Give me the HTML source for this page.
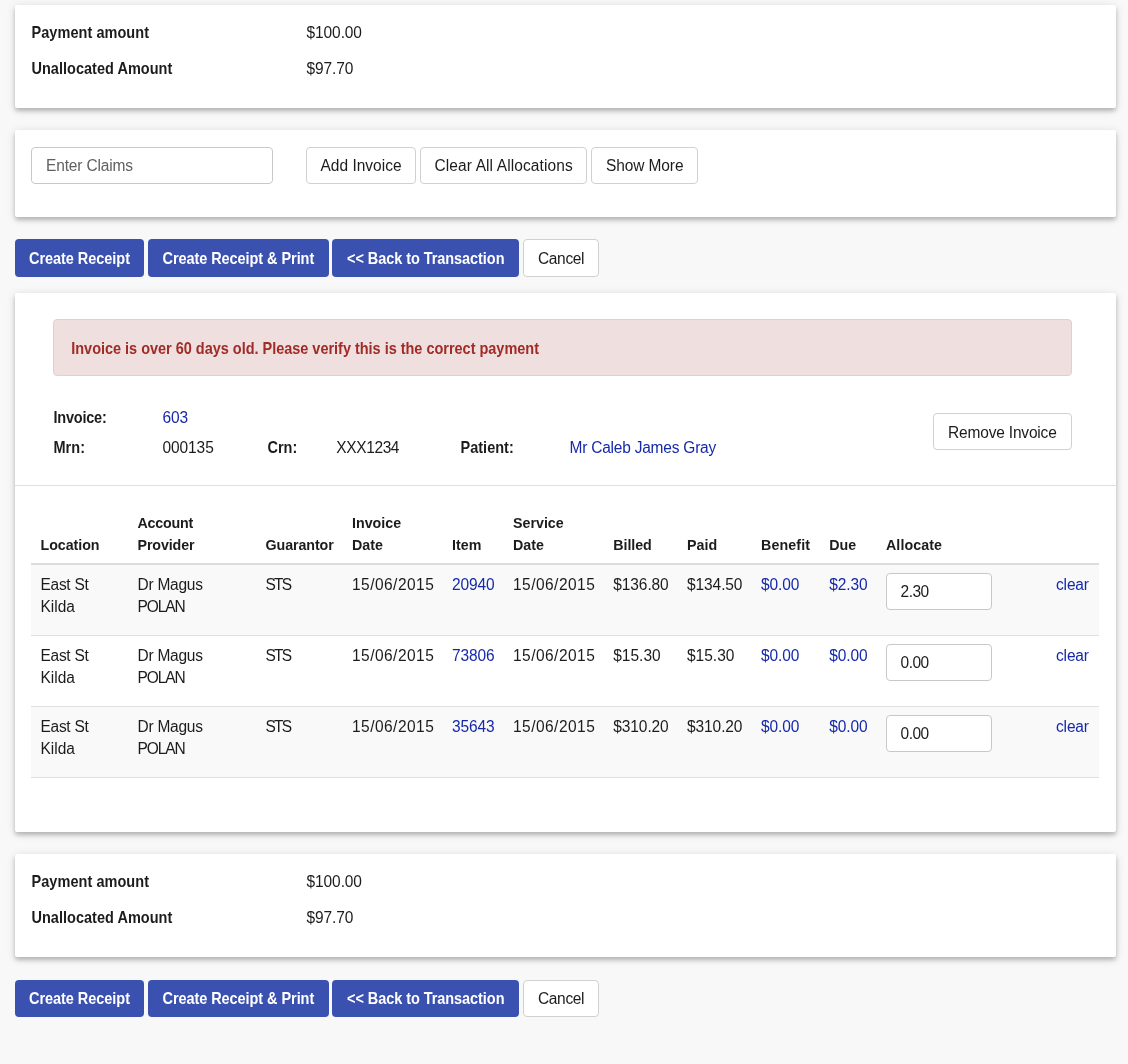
<!DOCTYPE html>
<html><head><meta charset="utf-8"><title>Receipt</title>
<style>
html,body{margin:0;padding:0;}
body{width:1128px;height:1064px;overflow:hidden;background:#f8f8f8;position:relative;font-family:"Liberation Sans",sans-serif;color:#1c1c1c;}
.r,.b{position:absolute;white-space:nowrap;line-height:1;font-size:15.5px;}
.r{transform:scaleY(1.03);transform-origin:0 13px;}
.b{font-weight:700;font-size:14.5px;transform:scaleY(1.08);transform-origin:0 12px;}
.card{position:absolute;background:#fff;border-radius:2px;box-shadow:0 2px 10px rgba(0,0,0,.14),0 3px 4px rgba(0,0,0,.2);}
.inp{position:absolute;box-sizing:border-box;background:#fff;border:1px solid #c8c8c8;border-radius:4px;}
.bd,.bp{position:absolute;box-sizing:border-box;border-radius:4px;}
.bd{background:#fff;border:1px solid #d0d0d0;}
.bp{background:#3b51b0;}
.alert{position:absolute;box-sizing:border-box;background:#efdfdf;border:1px solid #e6cdd0;border-radius:4px;}
.sep{position:absolute;background:#e0e0e0;}
.stripe{position:absolute;background:#f9f9f9;}
</style></head><body>
<div id="w" style="position:absolute;left:0;top:0;width:1128px;height:1064px;will-change:transform">
<div class="card" style="left:15px;top:5px;width:1101px;height:103px;"></div>
<span class="b" style="left:31.5px;top:26px;letter-spacing:0.052px;">Payment amount</span>
<span class="r" style="left:306.5px;top:25px;letter-spacing:-0.089px;">$100.00</span>
<span class="b" style="left:31.5px;top:62px;letter-spacing:0.018px;">Unallocated Amount</span>
<span class="r" style="left:306.5px;top:61px;letter-spacing:-0.083px;">$97.70</span>
<div class="card" style="left:15px;top:130px;width:1101px;height:87px;"></div>
<div class="inp" style="left:31px;top:147px;width:242px;height:37px;"></div>
<span class="r" style="left:46px;top:158px;color:#616161;letter-spacing:-0.157px;">Enter Claims</span>
<div class="bd" style="left:306px;top:147px;width:110px;height:37px"></div>
<span class="r" style="left:320.5px;top:158px;letter-spacing:-0.000px;">Add Invoice</span>
<div class="bd" style="left:420px;top:147px;width:167px;height:37px"></div>
<span class="r" style="left:434.5px;top:158px;letter-spacing:0.106px;">Clear All Allocations</span>
<div class="bd" style="left:591px;top:147px;width:107px;height:37px"></div>
<span class="r" style="left:606.0px;top:158px;letter-spacing:-0.112px;">Show More</span>
<div class="bp" style="left:15px;top:239px;width:129px;height:38px"></div>
<span class="b" style="left:29.0px;top:252px;color:#fff;letter-spacing:-0.042px;">Create Receipt</span>
<div class="bp" style="left:148px;top:239px;width:181px;height:38px"></div>
<span class="b" style="left:162.5px;top:252px;color:#fff;letter-spacing:-0.065px;">Create Receipt &amp; Print</span>
<div class="bp" style="left:332px;top:239px;width:187px;height:38px"></div>
<span class="b" style="left:347.0px;top:252px;color:#fff;letter-spacing:-0.060px;">&lt;&lt; Back to Transaction</span>
<div class="bd" style="left:523px;top:239px;width:76px;height:38px"></div>
<span class="r" style="left:538.0px;top:251px;letter-spacing:-0.350px;">Cancel</span>
<div class="card" style="left:15px;top:293px;width:1101px;height:539px;"></div>
<div class="alert" style="left:53px;top:319px;width:1019px;height:57px;"></div>
<span class="b" style="left:71.25px;top:342px;color:#a12b27;letter-spacing:-0.019px;">Invoice is over 60 days old. Please verify this is the correct payment</span>
<span class="b" style="left:53.5px;top:411px;letter-spacing:-0.221px;">Invoice:</span>
<span class="r" style="left:162.5px;top:410px;color:#1529aa;letter-spacing:-0.177px;">603</span>
<span class="b" style="left:53.5px;top:441px;letter-spacing:0.031px;">Mrn:</span>
<span class="r" style="left:162.5px;top:440px;letter-spacing:-0.095px;">000135</span>
<span class="b" style="left:267.5px;top:441px;">Crn:</span>
<span class="r" style="left:336.25px;top:440px;letter-spacing:-0.376px;">XXX1234</span>
<span class="b" style="left:460.5px;top:441px;letter-spacing:0.011px;">Patient:</span>
<span class="r" style="left:569.5px;top:440px;color:#1529aa;letter-spacing:-0.222px;">Mr Caleb James Gray</span>
<div class="bd" style="left:933px;top:413px;width:139px;height:37px"></div>
<span class="r" style="left:948.0px;top:425px;letter-spacing:-0.180px;">Remove Invoice</span>
<div class="sep" style="left:15px;top:485px;width:1101px;height:1px;"></div>
<span class="b" style="left:40.5px;top:538px;font-size:14.25px;letter-spacing:-0.054px;">Location</span>
<span class="b" style="left:137.5px;top:516px;font-size:14.25px;letter-spacing:-0.208px;">Account</span>
<span class="b" style="left:137.5px;top:538px;font-size:14.25px;letter-spacing:-0.116px;">Provider</span>
<span class="b" style="left:265.5px;top:538px;font-size:14.25px;letter-spacing:-0.079px;">Guarantor</span>
<span class="b" style="left:352px;top:516px;font-size:14.25px;">Invoice</span>
<span class="b" style="left:352px;top:538px;font-size:14.25px;">Date</span>
<span class="b" style="left:452px;top:538px;font-size:14.25px;">Item</span>
<span class="b" style="left:513px;top:516px;font-size:14.25px;">Service</span>
<span class="b" style="left:513px;top:538px;font-size:14.25px;">Date</span>
<span class="b" style="left:613.25px;top:538px;font-size:14.25px;letter-spacing:-0.061px;">Billed</span>
<span class="b" style="left:687px;top:538px;font-size:14.25px;">Paid</span>
<span class="b" style="left:761px;top:538px;font-size:14.25px;letter-spacing:0.118px;">Benefit</span>
<span class="b" style="left:829.25px;top:538px;font-size:14.25px;">Due</span>
<span class="b" style="left:886px;top:538px;font-size:14.25px;letter-spacing:0.081px;">Allocate</span>
<div class="sep" style="left:31px;top:563px;width:1068px;height:2px;background:#dcdcdc"></div>
<div class="stripe" style="left:31px;top:565px;width:1068px;height:70px;"></div>
<div class="sep" style="left:31px;top:635px;width:1068px;height:1px;"></div>
<span class="r" style="left:40.5px;top:577px;letter-spacing:-0.287px;">East St</span>
<span class="r" style="left:40.5px;top:599px;">Kilda</span>
<span class="r" style="left:137.5px;top:577px;letter-spacing:-0.242px;">Dr Magus</span>
<span class="r" style="left:137.5px;top:599px;letter-spacing:-1.074px;">POLAN</span>
<span class="r" style="left:265.5px;top:577px;letter-spacing:-1.824px;">STS</span>
<span class="r" style="left:352px;top:577px;letter-spacing:0.464px;">15/06/2015</span>
<span class="r" style="left:452px;top:577px;color:#1529aa;letter-spacing:-0.151px;">20940</span>
<span class="r" style="left:513px;top:577px;letter-spacing:0.464px;">15/06/2015</span>
<span class="r" style="left:613.25px;top:577px;letter-spacing:-0.089px;">$136.80</span>
<span class="r" style="left:687px;top:577px;letter-spacing:-0.089px;">$134.50</span>
<span class="r" style="left:761px;top:577px;color:#1529aa;letter-spacing:-0.133px;">$0.00</span>
<span class="r" style="left:829.25px;top:577px;color:#1529aa;letter-spacing:-0.133px;">$2.30</span>
<div class="inp" style="left:886px;top:573px;width:106px;height:37px;"></div>
<span class="r" style="left:900.5px;top:584px;letter-spacing:-0.488px;">2.30</span>
<span class="r" style="left:1056px;top:577px;color:#1529aa;letter-spacing:-0.151px;">clear</span>
<div class="sep" style="left:31px;top:706px;width:1068px;height:1px;"></div>
<span class="r" style="left:40.5px;top:648px;letter-spacing:-0.287px;">East St</span>
<span class="r" style="left:40.5px;top:670px;">Kilda</span>
<span class="r" style="left:137.5px;top:648px;letter-spacing:-0.242px;">Dr Magus</span>
<span class="r" style="left:137.5px;top:670px;letter-spacing:-1.074px;">POLAN</span>
<span class="r" style="left:265.5px;top:648px;letter-spacing:-1.824px;">STS</span>
<span class="r" style="left:352px;top:648px;letter-spacing:0.464px;">15/06/2015</span>
<span class="r" style="left:452px;top:648px;color:#1529aa;letter-spacing:-0.151px;">73806</span>
<span class="r" style="left:513px;top:648px;letter-spacing:0.464px;">15/06/2015</span>
<span class="r" style="left:613.25px;top:648px;">$15.30</span>
<span class="r" style="left:687px;top:648px;">$15.30</span>
<span class="r" style="left:761px;top:648px;color:#1529aa;letter-spacing:-0.133px;">$0.00</span>
<span class="r" style="left:829.25px;top:648px;color:#1529aa;letter-spacing:-0.133px;">$0.00</span>
<div class="inp" style="left:886px;top:644px;width:106px;height:37px;"></div>
<span class="r" style="left:900.5px;top:655px;letter-spacing:-0.488px;">0.00</span>
<span class="r" style="left:1056px;top:648px;color:#1529aa;letter-spacing:-0.151px;">clear</span>
<div class="stripe" style="left:31px;top:707px;width:1068px;height:70px;"></div>
<div class="sep" style="left:31px;top:777px;width:1068px;height:1px;"></div>
<span class="r" style="left:40.5px;top:719px;letter-spacing:-0.287px;">East St</span>
<span class="r" style="left:40.5px;top:741px;">Kilda</span>
<span class="r" style="left:137.5px;top:719px;letter-spacing:-0.242px;">Dr Magus</span>
<span class="r" style="left:137.5px;top:741px;letter-spacing:-1.074px;">POLAN</span>
<span class="r" style="left:265.5px;top:719px;letter-spacing:-1.824px;">STS</span>
<span class="r" style="left:352px;top:719px;letter-spacing:0.464px;">15/06/2015</span>
<span class="r" style="left:452px;top:719px;color:#1529aa;letter-spacing:-0.151px;">35643</span>
<span class="r" style="left:513px;top:719px;letter-spacing:0.464px;">15/06/2015</span>
<span class="r" style="left:613.25px;top:719px;letter-spacing:-0.089px;">$310.20</span>
<span class="r" style="left:687px;top:719px;letter-spacing:-0.089px;">$310.20</span>
<span class="r" style="left:761px;top:719px;color:#1529aa;letter-spacing:-0.133px;">$0.00</span>
<span class="r" style="left:829.25px;top:719px;color:#1529aa;letter-spacing:-0.133px;">$0.00</span>
<div class="inp" style="left:886px;top:715px;width:106px;height:37px;"></div>
<span class="r" style="left:900.5px;top:726px;letter-spacing:-0.488px;">0.00</span>
<span class="r" style="left:1056px;top:719px;color:#1529aa;letter-spacing:-0.151px;">clear</span>
<div class="card" style="left:15px;top:854px;width:1101px;height:103px;"></div>
<span class="b" style="left:31.5px;top:875px;letter-spacing:0.052px;">Payment amount</span>
<span class="r" style="left:306.5px;top:874px;letter-spacing:-0.089px;">$100.00</span>
<span class="b" style="left:31.5px;top:911px;letter-spacing:0.018px;">Unallocated Amount</span>
<span class="r" style="left:306.5px;top:910px;letter-spacing:-0.083px;">$97.70</span>
<div class="bp" style="left:15px;top:980px;width:129px;height:37px"></div>
<span class="b" style="left:29.0px;top:992px;color:#fff;letter-spacing:-0.042px;">Create Receipt</span>
<div class="bp" style="left:148px;top:980px;width:181px;height:37px"></div>
<span class="b" style="left:162.5px;top:992px;color:#fff;letter-spacing:-0.065px;">Create Receipt &amp; Print</span>
<div class="bp" style="left:332px;top:980px;width:187px;height:37px"></div>
<span class="b" style="left:347.0px;top:992px;color:#fff;letter-spacing:-0.060px;">&lt;&lt; Back to Transaction</span>
<div class="bd" style="left:523px;top:980px;width:76px;height:37px"></div>
<span class="r" style="left:538.0px;top:991px;letter-spacing:-0.350px;">Cancel</span>
</div>
</body></html>
